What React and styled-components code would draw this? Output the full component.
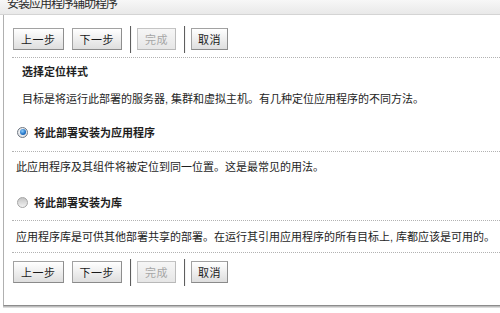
import React from "react";
import styled, { createGlobalStyle } from "styled-components";

const Global = createGlobalStyle`
  html, body { margin: 0; padding: 0; background: #ffffff; }
  body {
    font-family: "Liberation Sans", "Noto Sans CJK SC", sans-serif;
    font-size: 11px;
    color: #1e1e1e;
    width: 500px;
    height: 313px;
    overflow: hidden;
  }
`;

const Header = styled.div`
  height: 14px;
  overflow: hidden;
  background: linear-gradient(#f7f7f7, #e9e9e9);
  border-bottom: 1px solid #d4d4d4;
  padding-left: 7px;
`;

const Title = styled.div`
  margin-top: -4px;
  font-size: 12px;
  line-height: 17px;
  letter-spacing: -1px;
  color: #2a2a2a;
`;

const Panel = styled.div`
  margin-left: 3px;
  border-left: 1px solid #b0b0b0;
  border-bottom: 1px solid #8c8c8c;
  box-shadow: 0 1px 0 #bdbdbd, 0 2px 0 #dcdcdc;
  padding: 13px 0 22px 8px;
`;

const Toolbar = styled.div`
  display: flex;
  align-items: center;
  gap: 8px;
  padding-left: 1px;
  height: 22px;
  margin-top: ${(p) => p.$mt || 0}px;
`;

const Button = styled.button`
  font-family: inherit;
  font-size: 11px;
  height: 22px;
  padding: 0 ${(p) => p.$pad || 7}px;
  margin: 0;
  letter-spacing: 0.5px;
  border: 1px solid ${(p) => (p.disabled ? "#c4c4c4" : "#a2a2a2")};
  border-right-color: ${(p) => (p.disabled ? "#bcbcbc" : "#8e8e8e")};
  border-bottom-color: ${(p) => (p.disabled ? "#b8b8b8" : "#8a8a8a")};
  border-radius: 0;
  background: ${(p) =>
    p.disabled
      ? "linear-gradient(#f6f6f6, #e6e6e6)"
      : "linear-gradient(#ffffff, #f2f2f2 40%, #dedede)"};
  color: ${(p) => (p.disabled ? "#a6a6a6" : "#1a1a1a")};
  cursor: default;
`;

const Sep = styled.span`
  display: block;
  width: 1px;
  height: 27px;
  background: #5e5e5e;
  border-right: 1px solid #f4f4f4;
  margin: 0 -3px 0 0;
`;

const Divider = styled.div`
  border-top: 1px dotted #b2b2b2;
  margin-top: ${(p) => p.$mt}px;
`;

const Line = styled.div`
  line-height: 16px;
  padding-left: ${(p) => p.$indent}px;
  margin-top: ${(p) => p.$mt}px;
  font-weight: ${(p) => (p.$bold ? 700 : 400)};
  white-space: nowrap;
`;

const RadioRow = styled.label`
  display: flex;
  align-items: center;
  gap: 6px;
  height: 16px;
  padding-left: 5px;
  margin-top: ${(p) => p.$mt}px;
  font-weight: 700;
  white-space: nowrap;
`;

const Radio = styled.span`
  position: relative;
  width: 11px;
  height: 11px;
  box-sizing: border-box;
  border-radius: 50%;
  border: 1px solid ${(p) => (p.$on ? "#6f7782" : "#a4a4a4")};
  background: ${(p) =>
    p.$on
      ? "radial-gradient(circle at 50% 40%, #ffffff, #d4d8de)"
      : "linear-gradient(#c4c4c4, #f2f2f2)"};
  flex: none;
  &::after {
    content: "";
    display: ${(p) => (p.$on ? "block" : "none")};
    position: absolute;
    left: 1.5px;
    top: 1.5px;
    width: 6px;
    height: 6px;
    border-radius: 50%;
    background: radial-gradient(circle at 40% 35%, #8fd0ff, #1d6fc4 60%, #0b3f86);
  }
`;

function Buttons({ mt }) {
  return (
    <Toolbar $mt={mt}>
      <Button>上一步</Button>
      <Button>下一步</Button>
      <Sep />
      <Button disabled $pad={7}>完成</Button>
      <Sep />
      <Button $pad={6}>取消</Button>
    </Toolbar>
  );
}

export default function App() {
  return (
    <>
      <Global />
      <Header>
        <Title>安装应用程序辅助程序</Title>
      </Header>
      <Panel>
        <Buttons />
        <Divider $mt={7} />
        <Line $bold $indent={10} $mt={6}>选择定位样式</Line>
        <Line $indent={10} $mt={11}>
          目标是将运行此部署的服务器, 集群和虚拟主机。有几种定位应用程序的不同方法。
        </Line>
        <RadioRow $mt={17}>
          <Radio $on />
          将此部署安装为应用程序
        </RadioRow>
        <Divider $mt={11} />
        <Line $indent={4} $mt={7}>此应用程序及其组件将被定位到同一位置。这是最常见的用法。</Line>
        <RadioRow $mt={19}>
          <Radio />
          将此部署安装为库
        </RadioRow>
        <Divider $mt={10} />
        <Line $indent={4} $mt={8}>
          应用程序库是可供其他部署共享的部署。在运行其引用应用程序的所有目标上, 库都应该是可用的。
        </Line>
        <Divider $mt={7} />
        <Buttons mt={8} />
      </Panel>
    </>
  );
}
